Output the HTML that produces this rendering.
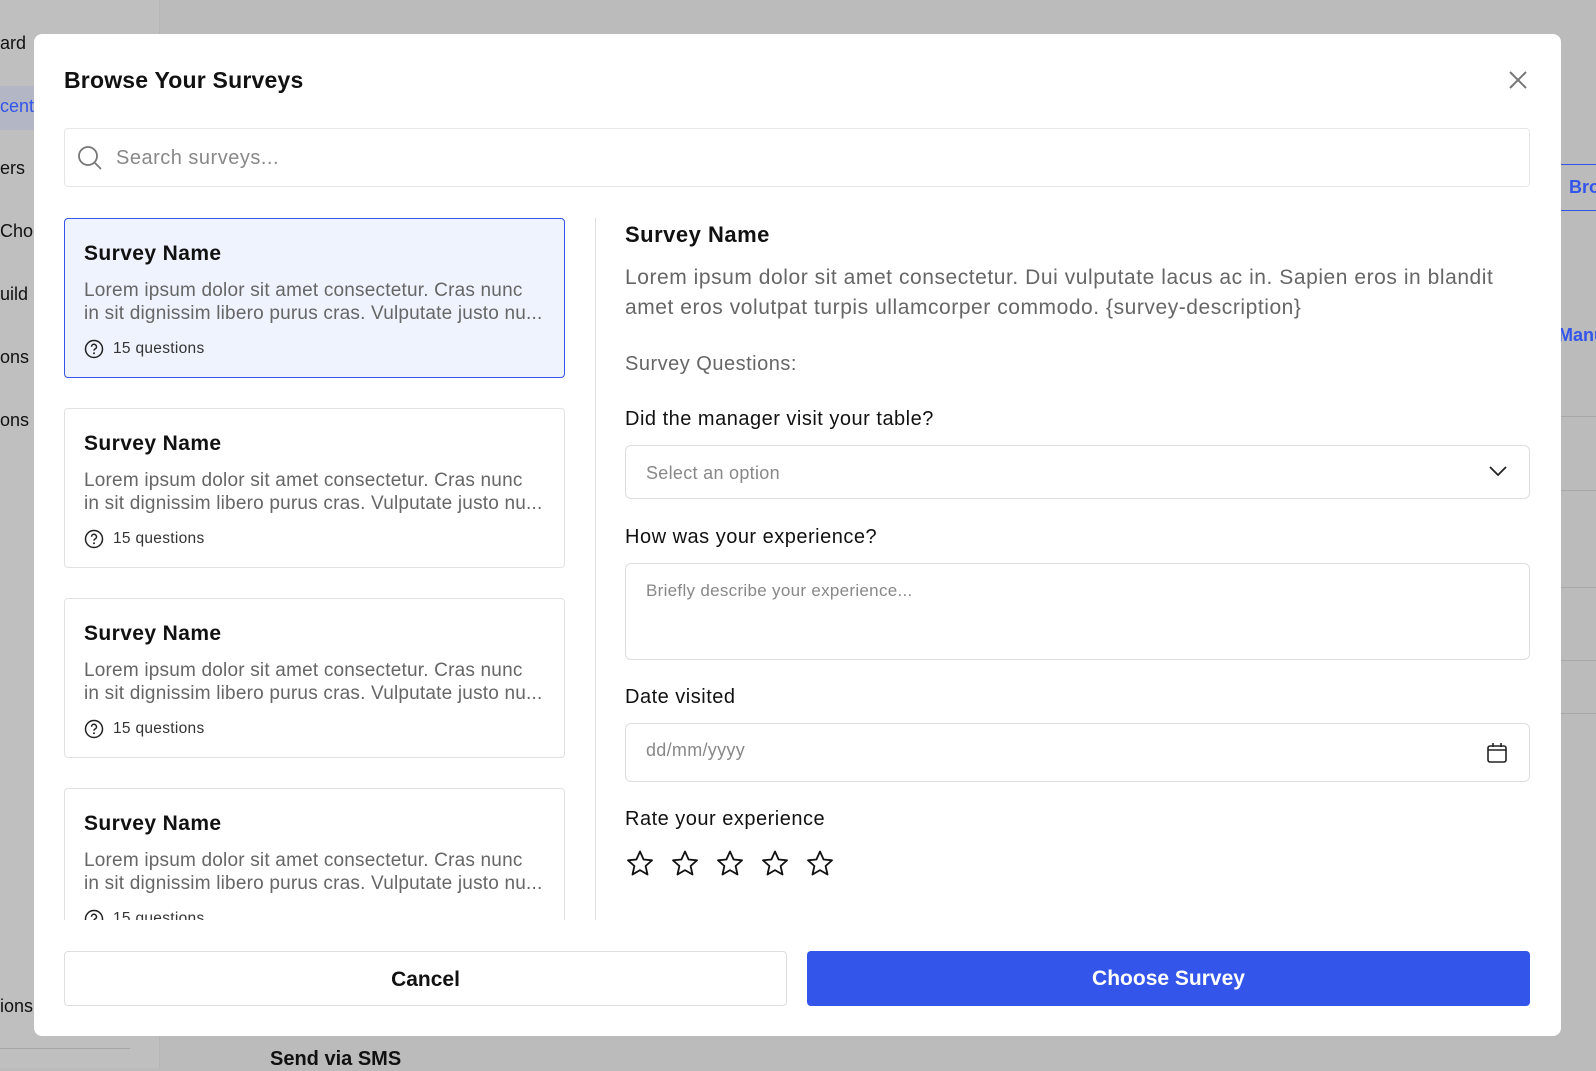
<!DOCTYPE html>
<html><head><meta charset="utf-8"><style>
*{box-sizing:border-box;margin:0;padding:0}
body{width:1596px;height:1068px;overflow:hidden;background:#bbbbbb;font-family:"Liberation Sans",sans-serif;position:relative}
.abs{position:absolute}
.side{left:0;top:0;width:160px;height:1068px;background:#bfbfbf;border-right:1px solid #b5b5b5}
.bgt{position:absolute;font-size:18px;color:#111;white-space:nowrap}
.modal{left:34px;top:34px;width:1527px;height:1002px;background:#fff;border-radius:8px}
.card{position:absolute;left:30px;width:501px;height:160px;border:1px solid #e2e2e2;border-radius:4px;background:#fff}
.card.sel{background:#eff3fe;border:1.5px solid #3355ea}
.card h3{position:absolute;left:19px;top:23px;font-size:21px;font-weight:bold;color:#111;letter-spacing:0.4px}
.card p{position:absolute;left:19px;top:60px;font-size:19px;line-height:23px;color:#666;white-space:nowrap;letter-spacing:0.2px}
.card .q{position:absolute;left:19px;top:120px;font-size:15.5px;color:#333;display:flex;align-items:center;gap:9px;letter-spacing:0.3px}
.lbl{position:absolute;left:591px;font-size:20px;color:#111;letter-spacing:0.5px}
.box{position:absolute;left:591px;width:905px;border:1px solid #dedede;border-radius:6px}
.ph{position:absolute;left:20px;font-size:18px;color:#888;letter-spacing:0.3px}
</style></head><body>
<div class="abs side"></div>
<div class="bgt" style="left:0;top:33px">ard</div>
<div class="abs" style="left:0;top:86px;width:40px;height:44px;background:#b3b6c4"></div>
<div class="bgt" style="left:0;top:96px;color:#3355ea">cent</div>
<div class="bgt" style="left:0;top:158px">ers</div>
<div class="bgt" style="left:0;top:221px">Cho</div>
<div class="bgt" style="left:0;top:284px">uild</div>
<div class="bgt" style="left:0;top:347px">ons</div>
<div class="bgt" style="left:0;top:410px">ons</div>
<div class="bgt" style="left:0;top:996px">ions</div>
<div class="abs" style="left:0;top:1048px;width:130px;height:1px;background:#a8a8a8"></div>
<div class="bgt" style="left:270px;top:1048px;font-weight:bold;font-size:20px">Send via SMS</div>
<div class="abs" style="left:1561px;top:164px;width:40px;height:47px;border-top:1.5px solid #3355ea;border-bottom:1.5px solid #3355ea"></div>
<div class="bgt" style="left:1569px;top:177px;color:#3355ea;font-weight:bold">Bro</div>
<div class="bgt" style="left:1558px;top:325px;color:#3355ea;font-weight:bold">Manu</div>
<div class="abs" style="left:1561px;top:416px;width:40px;height:1px;background:#a8a8a8"></div>
<div class="abs" style="left:1561px;top:490px;width:40px;height:1px;background:#a8a8a8"></div>
<div class="abs" style="left:1561px;top:587px;width:40px;height:1px;background:#a8a8a8"></div>
<div class="abs" style="left:1561px;top:660px;width:40px;height:1px;background:#a8a8a8"></div>
<div class="abs" style="left:1561px;top:713px;width:40px;height:1px;background:#a8a8a8"></div>

<div class="abs modal">
  <div class="abs" style="left:30px;top:33px;font-size:23px;font-weight:bold;color:#111;letter-spacing:0.2px">Browse Your Surveys</div>
  <svg class="abs" style="left:1474px;top:36px" width="20" height="20" viewBox="0 0 20 20"><path d="M2 2L18 18M18 2L2 18" stroke="#777" stroke-width="2" fill="none"/></svg>
  <div class="abs" style="left:30px;top:94px;width:1466px;height:59px;border:1.5px solid #e6e6e6;border-radius:4px">
    <svg class="abs" style="left:12px;top:16px" width="26" height="26" viewBox="0 0 26 26"><circle cx="11" cy="11" r="9" stroke="#777" stroke-width="1.8" fill="none"/><path d="M18 18L24 24" stroke="#777" stroke-width="1.8"/></svg>
    <div class="abs" style="left:51px;top:18px;font-size:20px;color:#888;letter-spacing:0.5px">Search surveys...</div>
  </div>
  <div class="abs" style="left:0;top:184px;width:560px;height:702px;overflow:hidden">
    <div class="card sel" style="top:0"><h3>Survey Name</h3><p>Lorem ipsum dolor sit amet consectetur. Cras nunc<br>in sit dignissim libero purus cras. Vulputate justo nu...</p><div class="q"><svg width="20" height="20" viewBox="0 0 20 20"><circle cx="10" cy="10" r="8.5" stroke="#222" stroke-width="1.5" fill="none"/><path d="M7.5 7.8a2.5 2.5 0 1 1 3.4 2.3c-.6.3-.9.8-.9 1.5" stroke="#222" stroke-width="1.5" fill="none"/><circle cx="10" cy="14.3" r="1" fill="#222"/></svg>15 questions</div></div>
    <div class="card" style="top:190px"><h3>Survey Name</h3><p>Lorem ipsum dolor sit amet consectetur. Cras nunc<br>in sit dignissim libero purus cras. Vulputate justo nu...</p><div class="q"><svg width="20" height="20" viewBox="0 0 20 20"><circle cx="10" cy="10" r="8.5" stroke="#222" stroke-width="1.5" fill="none"/><path d="M7.5 7.8a2.5 2.5 0 1 1 3.4 2.3c-.6.3-.9.8-.9 1.5" stroke="#222" stroke-width="1.5" fill="none"/><circle cx="10" cy="14.3" r="1" fill="#222"/></svg>15 questions</div></div>
    <div class="card" style="top:380px"><h3>Survey Name</h3><p>Lorem ipsum dolor sit amet consectetur. Cras nunc<br>in sit dignissim libero purus cras. Vulputate justo nu...</p><div class="q"><svg width="20" height="20" viewBox="0 0 20 20"><circle cx="10" cy="10" r="8.5" stroke="#222" stroke-width="1.5" fill="none"/><path d="M7.5 7.8a2.5 2.5 0 1 1 3.4 2.3c-.6.3-.9.8-.9 1.5" stroke="#222" stroke-width="1.5" fill="none"/><circle cx="10" cy="14.3" r="1" fill="#222"/></svg>15 questions</div></div>
    <div class="card" style="top:570px"><h3>Survey Name</h3><p>Lorem ipsum dolor sit amet consectetur. Cras nunc<br>in sit dignissim libero purus cras. Vulputate justo nu...</p><div class="q"><svg width="20" height="20" viewBox="0 0 20 20"><circle cx="10" cy="10" r="8.5" stroke="#222" stroke-width="1.5" fill="none"/><path d="M7.5 7.8a2.5 2.5 0 1 1 3.4 2.3c-.6.3-.9.8-.9 1.5" stroke="#222" stroke-width="1.5" fill="none"/><circle cx="10" cy="14.3" r="1" fill="#222"/></svg>15 questions</div></div>
  </div>
  <div class="abs" style="left:561px;top:184px;width:1px;height:702px;background:#e2e2e2"></div>

  <div class="lbl" style="top:188px;font-size:22px;font-weight:bold">Survey Name</div>
  <div class="abs" style="left:591px;top:229px;width:940px;font-size:21px;line-height:30px;color:#666;white-space:nowrap;letter-spacing:0.55px">Lorem ipsum dolor sit amet consectetur. Dui vulputate lacus ac in. Sapien eros in blandit<br>amet eros volutpat turpis ullamcorper commodo. {survey-description}</div>
  <div class="lbl" style="top:319px;color:#666">Survey Questions:</div>
  <div class="lbl" style="top:374px">Did the manager visit your table?</div>
  <div class="box" style="top:411px;height:54px"><div class="ph" style="top:17px">Select an option</div>
    <svg class="abs" style="left:862px;top:18px" width="20" height="14" viewBox="0 0 20 14"><path d="M2 3L10 11L18 3" stroke="#222" stroke-width="1.8" fill="none"/></svg></div>
  <div class="lbl" style="top:492px">How was your experience?</div>
  <div class="box" style="top:529px;height:97px"><div class="ph" style="top:17px;font-size:17px">Briefly describe your experience...</div></div>
  <div class="lbl" style="top:652px">Date visited</div>
  <div class="box" style="top:689px;height:59px"><div class="ph" style="top:16px">dd/mm/yyyy</div>
    <svg class="abs" style="left:860px;top:17px" width="22" height="24" viewBox="0 0 22 24"><rect x="2" y="5" width="18" height="16" rx="2" stroke="#222" stroke-width="1.6" fill="none"/><path d="M2 9H20M7 2V6M15 2V6" stroke="#222" stroke-width="1.6"/></svg></div>
  <div class="lbl" style="top:774px">Rate your experience</div>
  <svg class="abs" style="left:591px;top:815px" width="230" height="30" viewBox="0 0 230 30">
    <defs><path id="s" d="M15 2.5L18.6 10.5L27 11.3L20.6 17L22.5 25.5L15 21.1L7.5 25.5L9.4 17L3 11.3L11.4 10.5Z" stroke="#111" stroke-width="1.8" fill="none" stroke-linejoin="round"/></defs>
    <use href="#s" x="0"/><use href="#s" x="45"/><use href="#s" x="90"/><use href="#s" x="135"/><use href="#s" x="180"/>
  </svg>
  <div class="abs" style="left:30px;top:917px;width:723px;height:55px;border:1px solid #dedede;border-radius:4px;text-align:center;line-height:55px;font-size:21px;font-weight:bold;color:#111">Cancel</div>
  <div class="abs" style="left:773px;top:917px;width:723px;height:55px;background:#3355ea;border-radius:4px;text-align:center;line-height:56px;font-size:21px;font-weight:bold;color:#fff">Choose Survey</div>
</div>
</body></html>
